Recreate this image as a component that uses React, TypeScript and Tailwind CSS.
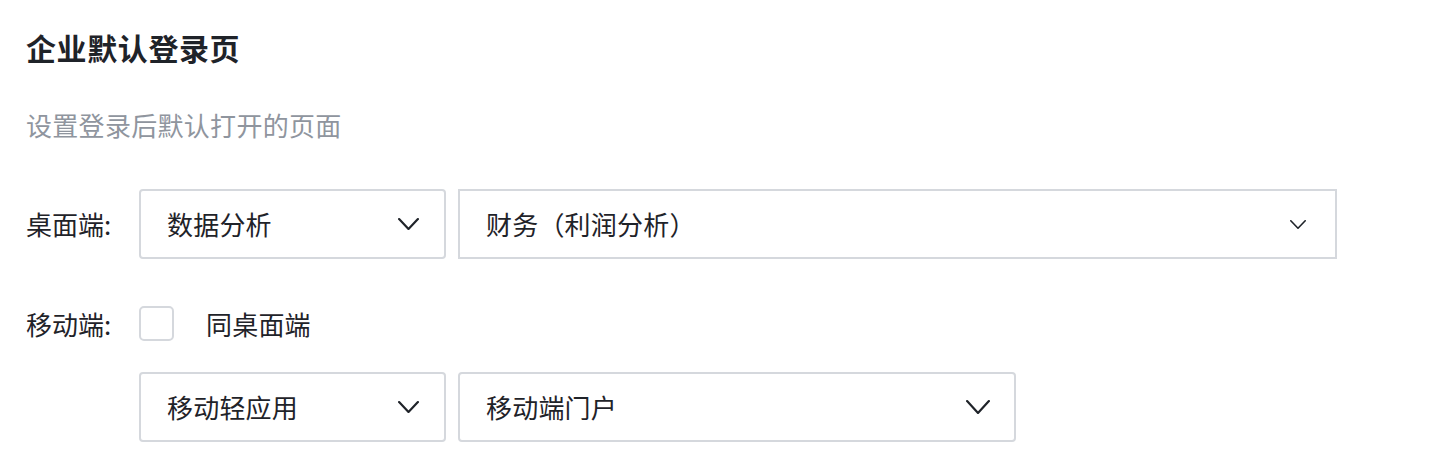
import * as React from 'react';

const font = { fontFamily: '"Noto Sans CJK SC", "Noto Sans", sans-serif' };

const Chevron: React.FC<{ w: number; h: number; stroke: number }> = ({ w, h, stroke }) => (
    <svg width={w} height={h} viewBox={`0 0 ${w} ${h}`} fill="none">
        <polyline
            points={`${stroke / 2},${stroke / 2} ${w / 2},${h - stroke / 2} ${w - stroke / 2},${stroke / 2}`}
            stroke="#1f2329"
            strokeWidth={stroke}
            strokeLinecap="round"
            strokeLinejoin="round"
        />
    </svg>
);

const SelectBox: React.FC<{ label: string; className: string; chevron: React.ReactNode; padRight: string }> = ({ label, className, chevron, padRight }) => (
    <div className={`flex h-[70px] items-center justify-between border-2 border-[#d5d8dd] bg-white pl-[26px] ${padRight} ${className}`}>
        <span className="text-[26px] leading-none tracking-[0.2px] text-[#1f2329]">{label}</span>
        {chevron}
    </div>
);

export default function App() {
    return (
        <div className="min-h-screen bg-white pl-[26px] pt-[27px]" style={font}>
            <h1 className="text-[30px] font-bold leading-[40px] tracking-[0.6px] text-[#1f2329]">企业默认登录页</h1>
            <p className="mt-[40px] text-[26px] leading-[36px] tracking-[0.3px] text-[#8f959e]">设置登录后默认打开的页面</p>

            <div className="mt-[46px] flex items-center">
                <div className="w-[113px] text-[26px] leading-none text-[#1f2329]">桌面端:</div>
                <SelectBox label="数据分析" className="w-[307px] rounded-[4px]" padRight="pr-[25px]" chevron={<Chevron w={21} h={12} stroke={2.2} />} />
                <SelectBox label="财务（利润分析）" className="ml-[12px] w-[879px]" padRight="pr-[29px]" chevron={<Chevron w={16} h={9} stroke={1.6} />} />
            </div>

            <div className="mt-[47px] flex items-center">
                <div className="w-[113px] text-[26px] leading-none text-[#1f2329]">移动端:</div>
                <div className="h-[35px] w-[35px] rounded-[5px] border-2 border-[#d5d8dd] bg-white" />
                <span className="ml-[32px] text-[26px] leading-none tracking-[0.2px] text-[#1f2329]">同桌面端</span>
            </div>

            <div className="mt-[31px] flex items-center pl-[113px]">
                <SelectBox label="移动轻应用" className="w-[307px] rounded-[4px]" padRight="pr-[25px]" chevron={<Chevron w={21} h={12} stroke={2.2} />} />
                <SelectBox label="移动端门户" className="ml-[12px] w-[558px] rounded-[4px]" padRight="pr-[24px]" chevron={<Chevron w={24} h={14} stroke={2.2} />} />
            </div>
        </div>
    );
}
